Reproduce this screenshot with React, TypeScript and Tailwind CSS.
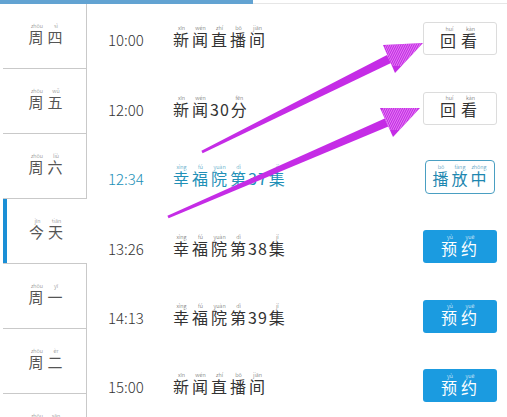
import React from 'react';

type Glyph = { c: string; p?: string };

const R: React.FC<{ g: Glyph[]; className?: string; rtClass?: string }> = ({ g, className = '', rtClass = '' }) => (
  <span className={className}>
    {g.map((x, i) =>
      x.p ? (
        <ruby key={i} className="mx-[1px]">
          {x.c}
          <rt className={`text-[5.5px] leading-[8px] font-light ${rtClass}`}>{x.p}</rt>
        </ruby>
      ) : (
        <span key={i}>{x.c}</span>
      )
    )}
  </span>
);

const days: { g: Glyph[]; active?: boolean }[] = [
  { g: [{ c: '周', p: 'zhōu' }, { c: '四', p: 'sì' }] },
  { g: [{ c: '周', p: 'zhōu' }, { c: '五', p: 'wǔ' }] },
  { g: [{ c: '周', p: 'zhōu' }, { c: '六', p: 'liù' }] },
  { g: [{ c: '今', p: 'jīn' }, { c: '天', p: 'tiān' }], active: true },
  { g: [{ c: '周', p: 'zhōu' }, { c: '一', p: 'yī' }] },
  { g: [{ c: '周', p: 'zhōu' }, { c: '二', p: 'èr' }] },
  { g: [{ c: '周', p: 'zhōu' }, { c: '三', p: 'sān' }] },
];

const news: Glyph[] = [
  { c: '新', p: 'xīn' },
  { c: '闻', p: 'wén' },
  { c: '直', p: 'zhí' },
  { c: '播', p: 'bō' },
  { c: '间', p: 'jiān' },
];
const xfy = (n: string): Glyph[] => [
  { c: '幸', p: 'xìng' },
  { c: '福', p: 'fú' },
  { c: '院', p: 'yuàn' },
  { c: '第', p: 'dì' },
  { c: n },
  { c: '集', p: 'jí' },
];

type Kind = 'replay' | 'playing' | 'book';
const shows: { time: string; title: Glyph[]; kind: Kind }[] = [
  { time: '10:00', title: news, kind: 'replay' },
  { time: '12:00', title: [{ c: '新', p: 'xīn' }, { c: '闻', p: 'wén' }, { c: '30' }, { c: '分', p: 'fēn' }], kind: 'replay' },
  { time: '12:34', title: xfy('37'), kind: 'playing' },
  { time: '13:26', title: xfy('38'), kind: 'book' },
  { time: '14:13', title: xfy('39'), kind: 'book' },
  { time: '15:00', title: news, kind: 'book' },
];

const Btn: React.FC<{ kind: Kind }> = ({ kind }) => {
  if (kind === 'replay')
    return (
      <div className="w-[74px] h-[33px] rounded-[3px] border border-[#dcdcdc] bg-white flex items-center justify-center text-[16px] text-[#333]">
        <R g={[{ c: '回', p: 'huí' }, { c: '看', p: 'kàn' }]} className="tracking-[3px]" rtClass="text-[#555] tracking-normal" />
      </div>
    );
  if (kind === 'playing')
    return (
      <div className="w-[70px] h-[34px] mr-[2px] rounded-[4px] border border-[#4a9fc2] bg-white flex items-center justify-center text-[16px] text-[#1e87b0]">
        <R g={[{ c: '播', p: 'bō' }, { c: '放', p: 'fàng' }, { c: '中', p: 'zhōng' }]} className="tracking-[1px]" rtClass="text-[#1e87b0] tracking-normal" />
      </div>
    );
  return (
    <div className="w-[74px] h-[33px] rounded-[3px] bg-[#1b9be0] flex items-center justify-center text-[16px] text-white">
      <R g={[{ c: '预', p: 'yù' }, { c: '约', p: 'yuē' }]} className="tracking-[2px]" rtClass="text-white tracking-normal" />
    </div>
  );
};

const Arrow: React.FC<{ id: string; shaft: string; head: string; hatch: [number, number, number, number][] }> = ({ id, shaft, head, hatch }) => (
  <g>
    <polygon points={shaft} fill="#c52ce6" />
    <polygon points={head} fill="#c52ce6" />
    <clipPath id={id}>
      <polygon points={head} />
    </clipPath>
    <g clipPath={`url(#${id})`} stroke="#f0a6f8" strokeWidth="0.7">
      {hatch.map((h, i) => (
        <line key={i} x1={h[0]} y1={h[1]} x2={h[2]} y2={h[3]} />
      ))}
    </g>
  </g>
);

const hatchFor = (x0: number, y0: number) =>
  Array.from({ length: 16 }, (_, i) => [x0 + i * 2.2, y0, x0 + i * 2.2 - 12, y0 + 24] as [number, number, number, number]);

export default function App() {
  return (
    <div
      className="relative w-[507px] h-[417px] overflow-hidden bg-white"
      style={{ fontFamily: '"Noto Sans CJK SC", "Noto Sans", sans-serif' }}
    >
      <div className="flex h-[4px]">
        <div className="w-[253px] bg-[#62a3d2]" />
        <div className="flex-1 border-b border-[#e6e6e6]" />
      </div>
      <div className="flex">
        <div className="w-[87px] pl-[3px] shrink-0">
          {days.map((d, i) => (
            <div
              key={i}
              className={`relative h-[65px] border-b border-[#c9c9c9] flex items-center justify-center text-[15px] text-[#555] ${
                d.active ? '' : 'border-r'
              }`}
            >
              {d.active && <div className="absolute left-0 top-0 bottom-0 w-[4px] bg-[#1b8fd6]" />}
              <R g={d.g} className="tracking-[2px] pl-[4px]" rtClass="text-[#777] tracking-normal" />
            </div>
          ))}
        </div>
        <div className="flex-1">
          {shows.map((s, i) => {
            const active = s.kind === 'playing';
            return (
              <div key={i} className="h-[69.4px] flex items-center pl-[21px] pr-[10px]">
                <div className={`flex-1 flex items-baseline ${active ? 'text-[#2290b7]' : 'text-[#333]'}`}>
                  <span className="w-[64px] text-[15px] font-light">{s.time}</span>
                  <R g={s.title} className="text-[16px] tracking-[1px]" rtClass={`tracking-normal ${active ? 'text-[#2290b7]' : 'text-[#555]'}`} />
                </div>
                <Btn kind={s.kind} />
              </div>
            );
          })}
        </div>
      </div>
      <svg className="absolute inset-0 pointer-events-none" width="507" height="417">
        <Arrow
          id="a1"
          shaft="202.6,153.3 201.4,150.7 387,55 391,63"
          head="423,43 383,45 395,73"
          hatch={hatchFor(388, 42)}
        />
        <Arrow
          id="a2"
          shaft="168.6,218.3 167.4,215.7 384.7,118.4 388.3,126.6"
          head="420,108 380,108 393,137"
          hatch={hatchFor(385, 106)}
        />
      </svg>
    </div>
  );
}
